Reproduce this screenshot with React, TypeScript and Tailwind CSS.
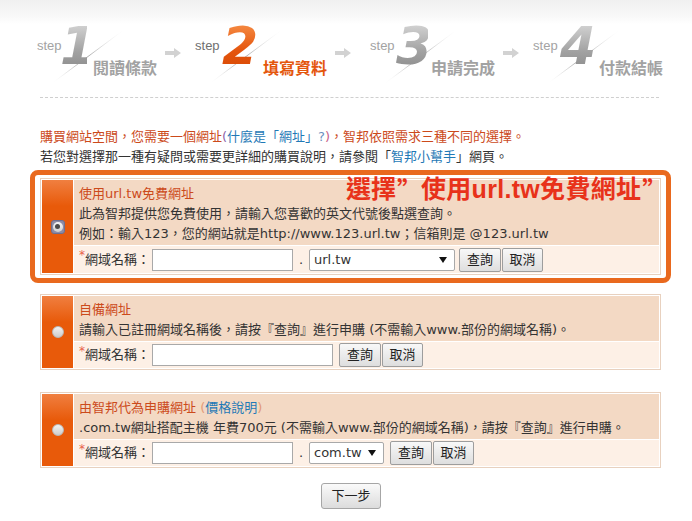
import React from "react";

const BODY = "font-['DejaVu_Sans','Noto_Sans_CJK_TC',sans-serif]";

function Arrow() {
  return (
    <svg width="16" height="10" viewBox="0 0 16 10" className="block">
      <path d="M0 3h9V0l7 5-7 5V7H0z" fill="#d2d2d2" />
    </svg>
  );
}

function Step({
  digit,
  label,
  active,
  digitW,
  digitMl,
  labelMl,
  digitShift,
}: {
  digit: string;
  label: string;
  active?: boolean;
  digitW: number;
  digitMl: string;
  labelMl: string;
  digitShift: string;
}) {
  return (
    <div className="relative flex items-start h-[65px]">
      <svg width="100" height="65" viewBox="0 0 100 65" className="absolute left-0 top-0">
        <defs>
          <linearGradient id={"g" + digit} x1="0" y1="1" x2="1" y2="0">
            <stop offset="0" stopColor="#ffffff" stopOpacity="0" />
            <stop offset="0.45" stopColor="#9a9a9a" />
            <stop offset="1" stopColor="#ffffff" stopOpacity="0" />
          </linearGradient>
        </defs>
        <line x1="14" y1="64" x2="88" y2="9" stroke={"url(#g" + digit + ")"} strokeWidth="1" />
      </svg>
      <div
        className={
          "relative mt-[19px] font-['Liberation_Sans',sans-serif] text-[13px] leading-[13px] w-[25px] " +
          (active ? "text-[#6f6f6f]" : "text-[#a3a3a3]")
        }
      >
        step
      </div>
      <div className={"relative mt-[0px] " + digitMl} style={{ width: digitW }}>
        <span
          className={
            "block font-['DejaVu_Sans',sans-serif] font-bold italic text-[52px] leading-[52px] bg-clip-text text-transparent " +
            digitShift +
            " " +
            (active
              ? "bg-[linear-gradient(to_bottom,#f8924a,#e4540c_60%,#d84a06)]"
              : "bg-[linear-gradient(to_bottom,#dadada,#a2a2a2_60%,#8a8a8a)]")
          }
        >
          {digit}
        </span>
      </div>
      <div
        className={
          "relative mt-[39px] font-['Noto_Sans_CJK_TC',sans-serif] font-bold text-[16px] leading-[16px] whitespace-nowrap " +
          labelMl +
          " " +
          (active ? "text-[#e4560c]" : "text-[#a2a2a2]")
        }
      >
        {label}
      </div>
    </div>
  );
}

function Radio({ checked }: { checked?: boolean }) {
  if (checked)
    return (
      <div className="w-[14px] h-[14px] rounded-[3px] bg-[#8c8ca6] border border-[#6f6f8e] flex items-center justify-center">
        <div className="w-[10px] h-[10px] rounded-full bg-[linear-gradient(to_bottom,#f6f6f6,#cfcfcf)] flex items-center justify-center">
          <div className="w-[5px] h-[5px] rounded-full bg-[#4a4a4a]" />
        </div>
      </div>
    );
  return (
    <div className="w-[12px] h-[12px] rounded-full border border-[#b9b9b9] bg-[linear-gradient(to_bottom,#f2f2f2,#cdcdcd)]" />
  );
}

function Btn({ children, w, ml }: { children: React.ReactNode; w: string; ml: string }) {
  return (
    <div
      className={
        "h-[24px] border border-[#9d9d9d] rounded-[2px] bg-[linear-gradient(to_bottom,#f8f8f8,#dedede)] flex items-center justify-center text-[13px] text-[#222] " +
        w +
        " " +
        ml
      }
    >
      {children}
    </div>
  );
}

function SelectBox({ value, w }: { value: string; w: string }) {
  return (
    <div
      className={
        "h-[22px] border border-[#a9a9a9] rounded-[2px] bg-white flex items-center justify-between pl-[4px] pr-[7px] text-[13px] text-[#333] " +
        w
      }
    >
      <span>{value}</span>
      <svg width="8" height="6" viewBox="0 0 8 6">
        <path d="M0 0h8L4 6z" fill="#111" />
      </svg>
    </div>
  );
}

function Label() {
  return (
    <>
      <span className="text-[#e8604a] text-[12px] self-start mt-[3px] leading-[12px]">*</span>
      <span className="whitespace-nowrap mr-[2px]">網域名稱：</span>
    </>
  );
}

function Box({
  checked,
  children,
  row,
  rowH,
}: {
  checked?: boolean;
  children: React.ReactNode;
  row: React.ReactNode;
  rowH: string;
}) {
  return (
    <div className="border border-[#e8d1bf] p-[1px] bg-white flex gap-[1px] w-[621px]">
      <div className="w-[31px] shrink-0 bg-[linear-gradient(to_bottom,#f07f40,#e85a0a_26px)] flex items-center justify-center">
        <Radio checked={checked} />
      </div>
      <div className="flex-1 flex flex-col gap-[1px]">
        <div className="bg-[#f3d9c4] pl-[5px] pt-[4px] pb-[1px] leading-[20px] whitespace-nowrap">{children}</div>
        <div className={"bg-[#fdf0e6] flex items-center pl-[5px] " + rowH}>{row}</div>
      </div>
    </div>
  );
}

export default function App() {
  return (
    <div className={"w-[692px] h-[521px] bg-white overflow-hidden text-[13px] text-[#333] " + BODY}>
      {/* header */}
      <div className="h-[97px] bg-[linear-gradient(to_bottom,#f0f0f0,#f8f8f8_16px,#ffffff_24px)] pt-[20px]">
        <div className="flex items-start pl-[37px]">
          <Step digit="1" label="閱讀條款" digitW={20} digitMl="ml-[5px]" labelMl="ml-[6px]" digitShift="-ml-[7px]" />
          <div className="ml-[8px] mt-[28px]">
            <Arrow />
          </div>
          <div className="ml-[14px]">
            <Step digit="2" label="填寫資料" active digitW={32} digitMl="ml-[5px]" labelMl="ml-[6px]" digitShift="-ml-[3px]" />
          </div>
          <div className="ml-[8px] mt-[28px]">
            <Arrow />
          </div>
          <div className="ml-[19px]">
            <Step digit="3" label="申請完成" digitW={29} digitMl="ml-[4px]" labelMl="ml-[3px]" digitShift="-ml-[3px]" />
          </div>
          <div className="ml-[8px] mt-[28px]">
            <Arrow />
          </div>
          <div className="ml-[14px]">
            <Step digit="4" label="付款結帳" digitW={33} digitMl="ml-[5px]" labelMl="ml-[3px]" digitShift="-ml-[3px]" />
          </div>
        </div>
      </div>
      <div className="ml-[40px] w-[619px] border-t border-dashed border-[#cfcfcf]" />

      {/* intro */}
      <div className="pl-[40px] mt-[29px] leading-[20px] whitespace-nowrap">
        <div className="text-[#cc4a1b]">
          購買網站空間，您需要一個網址
          <span className="text-[#8d62a8]">(</span>
          <span className="text-[#1f79b6]">什麼是「網址」</span>
          <span className="text-[#6a8fc0]">?</span>
          <span className="text-[#c8608a]">)</span>
          ，智邦依照需求三種不同的選擇。
        </div>
        <div>
          若您對選擇那一種有疑問或需要更詳細的購買說明，請參閱「<span className="text-[#1f79b6]">智邦小幫手</span>」網頁。
        </div>
      </div>

      {/* box 1 highlighted */}
      <div className="relative mt-[3px] ml-[30px] w-[641px] border-[5px] border-[#e9691e] rounded-[8px] px-[5px] py-[3px]">
        <Box
          checked
          rowH="h-[27px]"
          row={
            <>
              <Label />
              <div className="w-[141px] h-[22px] border border-[#a9a9a9] bg-white" />
              <span className="w-[16px] text-center">.</span>
              <SelectBox value="url.tw" w="w-[146px]" />
              <Btn w="w-[42px]" ml="ml-[4px]">查詢</Btn>
              <Btn w="w-[41px]" ml="ml-[1px]">取消</Btn>
            </>
          }
        >
          <div className="text-[#cc4a1b]">使用url.tw免費網址</div>
          <div>此為智邦提供您免費使用，請輸入您喜歡的英文代號後點選查詢。</div>
          <div>例如：輸入123，您的網站就是http://www.123.url.tw；信箱則是 @123.url.tw</div>
        </Box>
        <div className="absolute left-[311px] top-[2px] flex items-start font-['Liberation_Sans','Noto_Sans_CJK_TC',sans-serif] font-bold text-[25px] leading-[25px] text-[#e8321a] whitespace-nowrap">
          <span>選擇</span>
          <span className="inline-block w-[25px] font-['Noto_Sans_CJK_TC',sans-serif] pl-[1px]">”</span>
          <span className="tracking-[0.3px]">使用url.tw免費網址</span>
          <span className="inline-block w-[14px] font-['Noto_Sans_CJK_TC',sans-serif] pl-[1px]">”</span>
        </div>
      </div>

      {/* box 2 */}
      <div className="ml-[40px] mt-[11px]">
        <Box
          rowH="h-[26px]"
          row={
            <>
              <Label />
              <div className="w-[181px] h-[22px] border border-[#a9a9a9] bg-white" />
              <Btn w="w-[42px]" ml="ml-[6px]">查詢</Btn>
              <Btn w="w-[41px]" ml="ml-[1px]">取消</Btn>
            </>
          }
        >
          <div className="text-[#cc4a1b]">自備網址</div>
          <div>請輸入已註冊網域名稱後，請按『查詢』進行申購 (不需輸入www.部份的網域名稱)。</div>
        </Box>
      </div>

      {/* box 3 */}
      <div className="ml-[40px] mt-[22px]">
        <Box
          rowH="h-[26px]"
          row={
            <>
              <Label />
              <div className="w-[141px] h-[22px] border border-[#a9a9a9] bg-white" />
              <span className="w-[16px] text-center">.</span>
              <SelectBox value="com.tw" w="w-[75px]" />
              <Btn w="w-[42px]" ml="ml-[6px]">查詢</Btn>
              <Btn w="w-[41px]" ml="ml-[1px]">取消</Btn>
            </>
          }
        >
          <div className="text-[#cc4a1b]">
            由智邦代為申購網址 <span className="text-[#e29a78]">(</span>
            <span className="text-[#1f79b6]">價格說明</span>
            <span className="text-[#e29a78]">)</span>
          </div>
          <div>.com.tw網址搭配主機 年費700元 (不需輸入www.部份的網域名稱)，請按『查詢』進行申購。</div>
        </Box>
      </div>

      {/* next */}
      <div className="ml-[321px] mt-[15px] w-[60px] h-[26px] border border-[#a6a6a6] rounded-[3px] bg-[linear-gradient(to_bottom,#fafafa,#dcdcdc)] flex items-center justify-center text-[13px] text-[#222]">
        下一步
      </div>
    </div>
  );
}
